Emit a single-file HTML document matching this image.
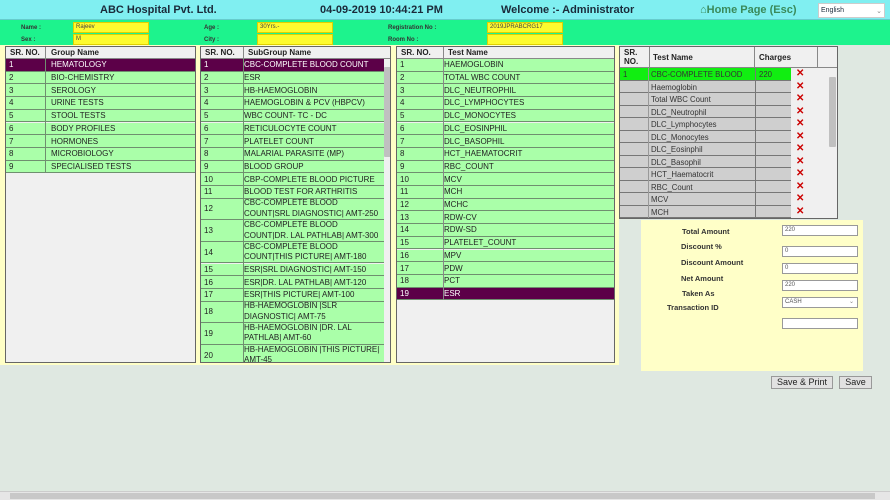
<!DOCTYPE html>
<html><head><meta charset="utf-8"><style>
*{box-sizing:border-box;margin:0;padding:0}
body{width:890px;height:500px;overflow:hidden;background:#dfe8e1;font-family:"Liberation Sans",Arial,sans-serif;position:relative}
.a{position:absolute}
#hdr{left:0;top:0;width:890px;height:20px;background:#80eff1;border-bottom:1px solid #6cc}
#hdr div{position:absolute;top:4px;font-size:11px;font-weight:bold;color:#1a2a3a}
#grn{left:0;top:20px;width:890px;height:25px;background:#1df38d}
.lb{position:absolute;font-size:6px;color:#333;font-weight:bold}
.yb{position:absolute;height:11px;background:#fdfb2e;border:1px solid #e0d000;font-size:6px;color:#444;padding-left:2px;line-height:9px}
#cream{left:0;top:45px;width:619px;height:320px;background:#ffffc6}
.pn{position:absolute;background:#f0f0f0;border:1px solid #666;overflow:hidden}
.r{position:absolute;left:0;background:#aaffa9;border-bottom:1px solid #6f8f6f;font-size:8px;color:#222;display:flex;align-items:center}
.r span{position:absolute;padding-left:3px}
.r.s{background:#5c0048;color:#fff}
.h{position:absolute;left:0;top:0;background:#f0f0f0;border-bottom:1px solid #888;font-size:8px;font-weight:bold;color:#222;height:12px}
.h span{position:absolute;top:1px;padding-left:4px}
.vl{position:absolute;top:0;bottom:0;width:1px;background:#888}
.sb{position:absolute;background:#f0f0f0}
.th{position:absolute;background:#c0c0c0;border-radius:1px}
.g{position:absolute;left:0;width:171px;height:12.5px;background:#cfcfcf;border-bottom:1px solid #777;font-size:7.8px;color:#333}
.g span{position:absolute;top:2px}
.x{position:absolute;left:176px;color:#c00;font-size:10px;font-weight:bold;line-height:10px}
#ybox{left:641px;top:220px;width:222px;height:151px;background:#ffffc8}
.fl{position:absolute;font-size:7.5px;font-weight:bold;color:#333}
.in{position:absolute;left:782px;width:76px;height:11px;background:#fff;border:1px solid #999;font-size:6px;color:#555;padding-left:2px;line-height:9px}
.bt{position:absolute;top:376px;height:13px;background:#e1e1e1;border:1px solid #999;font-size:9px;color:#222;text-align:center;line-height:11px}
</style></head><body>
<div id="hdr" class="a">
<div style="left:100px">ABC Hospital Pvt. Ltd.</div>
<div style="left:320px">04-09-2019 10:44:21 PM</div>
<div style="left:501px">Welcome :- Administrator</div>
<div style="left:700px;color:#3a8a5a">⌂Home Page (Esc)</div>
<div style="left:818px;top:3px;width:67px;height:15px;background:#fff;border:1px solid #ccc;font-weight:normal;font-size:7px;padding:3px 2px">English<span style="position:absolute;right:2px;color:#888">⌄</span></div>
</div>
<div id="grn" class="a">
<div class="lb" style="left:21px;top:5px">Name :</div>
<div class="lb" style="left:21px;top:17px">Sex :</div>
<div class="yb" style="left:73px;top:2px;width:76px">Rajeev</div>
<div class="yb" style="left:73px;top:14px;width:76px">M</div>
<div class="lb" style="left:204px;top:5px">Age :</div>
<div class="lb" style="left:204px;top:17px">City :</div>
<div class="yb" style="left:257px;top:2px;width:76px">30Yrs.-</div>
<div class="yb" style="left:257px;top:14px;width:76px"></div>
<div class="lb" style="left:388px;top:5px">Registration No :</div>
<div class="lb" style="left:388px;top:17px">Room No :</div>
<div class="yb" style="left:487px;top:2px;width:76px">2019JPRABCRG17</div>
<div class="yb" style="left:487px;top:14px;width:76px"></div>
</div>
<div id="cream" class="a"></div>

<!-- panel 1 -->
<div class="pn" style="left:5px;top:46px;width:191px;height:317px">
<div class="h" style="width:191px"><span>SR. NO.</span><span style="left:41px">Group Name</span></div>
<div class="vl" style="left:39px;height:126px"></div>
<div class="r s" style="top:12px;height:12.7px;width:189px"><span>1</span><span style="left:42px">HEMATOLOGY</span></div>
<div class="r" style="top:24.7px;height:12.7px;width:189px"><span>2</span><span style="left:42px">BIO-CHEMISTRY</span></div>
<div class="r" style="top:37.4px;height:12.7px;width:189px"><span>3</span><span style="left:42px">SEROLOGY</span></div>
<div class="r" style="top:50.1px;height:12.7px;width:189px"><span>4</span><span style="left:42px">URINE TESTS</span></div>
<div class="r" style="top:62.8px;height:12.7px;width:189px"><span>5</span><span style="left:42px">STOOL TESTS</span></div>
<div class="r" style="top:75.5px;height:12.7px;width:189px"><span>6</span><span style="left:42px">BODY PROFILES</span></div>
<div class="r" style="top:88.2px;height:12.7px;width:189px"><span>7</span><span style="left:42px">HORMONES</span></div>
<div class="r" style="top:100.9px;height:12.7px;width:189px"><span>8</span><span style="left:42px">MICROBIOLOGY</span></div>
<div class="r" style="top:113.6px;height:12.7px;width:189px"><span>9</span><span style="left:42px">SPECIALISED TESTS</span></div>
<div class="vl" style="left:39px;top:12px;height:114px;background:#6f8f6f"></div>
</div>

<!-- panel 2 -->
<div class="pn" style="left:200px;top:46px;width:191px;height:317px">
<div class="h" style="width:191px"><span>SR. NO.</span><span style="left:43px">SubGroup Name</span></div>
<div class="r s" style="top:12px;height:12.7px;width:183px"><span>1</span><span style="left:40px">CBC-COMPLETE BLOOD COUNT</span></div>
<div class="r" style="top:24.7px;height:12.7px;width:183px"><span>2</span><span style="left:40px">ESR</span></div>
<div class="r" style="top:37.4px;height:12.7px;width:183px"><span>3</span><span style="left:40px">HB-HAEMOGLOBIN</span></div>
<div class="r" style="top:50.1px;height:12.7px;width:183px"><span>4</span><span style="left:40px">HAEMOGLOBIN &amp; PCV (HBPCV)</span></div>
<div class="r" style="top:62.8px;height:12.7px;width:183px"><span>5</span><span style="left:40px">WBC COUNT- TC - DC</span></div>
<div class="r" style="top:75.5px;height:12.7px;width:183px"><span>6</span><span style="left:40px">RETICULOCYTE COUNT</span></div>
<div class="r" style="top:88.2px;height:12.7px;width:183px"><span>7</span><span style="left:40px">PLATELET COUNT</span></div>
<div class="r" style="top:100.9px;height:12.7px;width:183px"><span>8</span><span style="left:40px">MALARIAL PARASITE (MP)</span></div>
<div class="r" style="top:113.6px;height:12.7px;width:183px"><span>9</span><span style="left:40px">BLOOD GROUP</span></div>
<div class="r" style="top:126.3px;height:12.7px;width:183px"><span>10</span><span style="left:40px">CBP-COMPLETE BLOOD PICTURE</span></div>
<div class="r" style="top:139px;height:12.7px;width:183px"><span>11</span><span style="left:40px">BLOOD TEST FOR ARTHRITIS</span></div>
<div class="r" style="top:151.7px;height:21.6px;width:183px"><span>12</span><span style="left:40px;line-height:10.5px">CBC-COMPLETE BLOOD<br>COUNT|SRL DIAGNOSTIC| AMT-250</span></div>
<div class="r" style="top:173.3px;height:21.6px;width:183px"><span>13</span><span style="left:40px;line-height:10.5px">CBC-COMPLETE BLOOD<br>COUNT|DR. LAL PATHLAB| AMT-300</span></div>
<div class="r" style="top:194.9px;height:21.6px;width:183px"><span>14</span><span style="left:40px;line-height:10.5px">CBC-COMPLETE BLOOD<br>COUNT|THIS PICTURE| AMT-180</span></div>
<div class="r" style="top:216.5px;height:12.7px;width:183px"><span>15</span><span style="left:40px">ESR|SRL DIAGNOSTIC| AMT-150</span></div>
<div class="r" style="top:229.2px;height:12.7px;width:183px"><span>16</span><span style="left:40px">ESR|DR. LAL PATHLAB| AMT-120</span></div>
<div class="r" style="top:241.9px;height:12.7px;width:183px"><span>17</span><span style="left:40px">ESR|THIS PICTURE| AMT-100</span></div>
<div class="r" style="top:254.6px;height:21.6px;width:183px"><span>18</span><span style="left:40px;line-height:10.5px">HB-HAEMOGLOBIN |SLR<br>DIAGNOSTIC| AMT-75</span></div>
<div class="r" style="top:276.2px;height:21.6px;width:183px"><span>19</span><span style="left:40px;line-height:10.5px">HB-HAEMOGLOBIN |DR. LAL<br>PATHLAB| AMT-60</span></div>
<div class="r" style="top:297.8px;height:21.6px;width:183px"><span>20</span><span style="left:40px;line-height:10.5px">HB-HAEMOGLOBIN |THIS PICTURE|<br>AMT-45</span></div>
<div class="vl" style="left:42px;top:12px;height:305px;background:#6f8f6f"></div>
<div class="vl" style="left:42px;height:12px"></div>
<div class="sb" style="left:183px;top:12px;width:7px;height:305px"><div class="th" style="left:0;top:8px;width:7px;height:90px"></div></div>
</div>

<!-- panel 3 -->
<div class="pn" style="left:396px;top:46px;width:219px;height:317px">
<div class="h" style="width:219px"><span>SR. NO.</span><span style="left:47px">Test Name</span></div>
<div class="r" style="top:12px;height:12.7px;width:217px"><span>1</span><span style="left:44px">HAEMOGLOBIN</span></div>
<div class="r" style="top:24.7px;height:12.7px;width:217px"><span>2</span><span style="left:44px">TOTAL WBC COUNT</span></div>
<div class="r" style="top:37.4px;height:12.7px;width:217px"><span>3</span><span style="left:44px">DLC_NEUTROPHIL</span></div>
<div class="r" style="top:50.1px;height:12.7px;width:217px"><span>4</span><span style="left:44px">DLC_LYMPHOCYTES</span></div>
<div class="r" style="top:62.8px;height:12.7px;width:217px"><span>5</span><span style="left:44px">DLC_MONOCYTES</span></div>
<div class="r" style="top:75.5px;height:12.7px;width:217px"><span>6</span><span style="left:44px">DLC_EOSINPHIL</span></div>
<div class="r" style="top:88.2px;height:12.7px;width:217px"><span>7</span><span style="left:44px">DLC_BASOPHIL</span></div>
<div class="r" style="top:100.9px;height:12.7px;width:217px"><span>8</span><span style="left:44px">HCT_HAEMATOCRIT</span></div>
<div class="r" style="top:113.6px;height:12.7px;width:217px"><span>9</span><span style="left:44px">RBC_COUNT</span></div>
<div class="r" style="top:126.3px;height:12.7px;width:217px"><span>10</span><span style="left:44px">MCV</span></div>
<div class="r" style="top:139px;height:12.7px;width:217px"><span>11</span><span style="left:44px">MCH</span></div>
<div class="r" style="top:151.7px;height:12.7px;width:217px"><span>12</span><span style="left:44px">MCHC</span></div>
<div class="r" style="top:164.4px;height:12.7px;width:217px"><span>13</span><span style="left:44px">RDW-CV</span></div>
<div class="r" style="top:177.1px;height:12.7px;width:217px"><span>14</span><span style="left:44px">RDW-SD</span></div>
<div class="r" style="top:189.8px;height:12.7px;width:217px"><span>15</span><span style="left:44px">PLATELET_COUNT</span></div>
<div class="r" style="top:202.5px;height:12.7px;width:217px"><span>16</span><span style="left:44px">MPV</span></div>
<div class="r" style="top:215.2px;height:12.7px;width:217px"><span>17</span><span style="left:44px">PDW</span></div>
<div class="r" style="top:227.9px;height:12.7px;width:217px"><span>18</span><span style="left:44px">PCT</span></div>
<div class="r s" style="top:240.6px;height:12.7px;width:217px"><span>19</span><span style="left:44px">ESR</span></div>
<div class="vl" style="left:46px;height:253px"></div>
</div>

<!-- panel 4 -->
<div class="pn" style="left:619px;top:46px;width:219px;height:173px">
<div class="h" style="width:219px;height:21px"><span style="top:1px;line-height:9px">SR.<br>NO.</span><span style="left:29px;top:6px">Test Name</span><span style="left:135px;top:6px">Charges</span></div>
<div class="vl" style="left:29px;height:21px"></div><div class="vl" style="left:134px;height:21px"></div><div class="vl" style="left:197px;height:21px"></div>
<div class="g" style="top:21px;background:#11ee11"><span style="left:3px">1</span><span style="left:31px">CBC-COMPLETE BLOOD</span><span style="left:139px">220</span></div>
<div class="g" style="top:33.5px"><span style="left:31px">Haemoglobin</span></div>
<div class="g" style="top:46px"><span style="left:31px">Total WBC Count</span></div>
<div class="g" style="top:58.5px"><span style="left:31px">DLC_Neutrophil</span></div>
<div class="g" style="top:71px"><span style="left:31px">DLC_Lymphocytes</span></div>
<div class="g" style="top:83.5px"><span style="left:31px">DLC_Monocytes</span></div>
<div class="g" style="top:96px"><span style="left:31px">DLC_Eosinphil</span></div>
<div class="g" style="top:108.5px"><span style="left:31px">DLC_Basophil</span></div>
<div class="g" style="top:121px"><span style="left:31px">HCT_Haematocrit</span></div>
<div class="g" style="top:133.5px"><span style="left:31px">RBC_Count</span></div>
<div class="g" style="top:146px"><span style="left:31px">MCV</span></div>
<div class="g" style="top:158.5px"><span style="left:31px">MCH</span></div>
<div class="vl" style="left:28px;top:21px;background:#999"></div>
<div class="vl" style="left:135px;top:21px;background:#777"></div>
<div class="x" style="top:22px">✕</div><div class="x" style="top:34.5px">✕</div><div class="x" style="top:47px">✕</div><div class="x" style="top:59.5px">✕</div><div class="x" style="top:72px">✕</div><div class="x" style="top:84.5px">✕</div><div class="x" style="top:97px">✕</div><div class="x" style="top:109.5px">✕</div><div class="x" style="top:122px">✕</div><div class="x" style="top:134.5px">✕</div><div class="x" style="top:147px">✕</div><div class="x" style="top:159.5px">✕</div>
<div class="sb" style="left:208px;top:21px;width:9px;height:150px"><div class="th" style="left:1px;top:9px;width:7px;height:70px"></div></div>
</div>

<div id="ybox" class="a"></div>
<div class="fl" style="left:682px;top:227px">Total Amount</div>
<div class="fl" style="left:681px;top:242px">Discount %</div>
<div class="fl" style="left:681px;top:258px">Discount Amount</div>
<div class="fl" style="left:681px;top:274px">Net Amount</div>
<div class="fl" style="left:682px;top:289px">Taken As</div>
<div class="fl" style="left:667px;top:303px">Transaction ID</div>
<div class="in" style="top:225px">220</div>
<div class="in" style="top:246px">0</div>
<div class="in" style="top:263px">0</div>
<div class="in" style="top:280px">220</div>
<div class="in" style="top:297px">CASH<span style="position:absolute;right:3px;color:#888">⌄</span></div>
<div class="in" style="top:318px"></div>
<div class="bt" style="left:771px;width:62px">Save &amp; Print</div>
<div class="bt" style="left:839px;width:33px">Save</div>
<div class="a" style="left:0;top:491px;width:890px;height:9px;background:#e6e6e6;border-top:1px solid #ccc"><div style="position:absolute;left:10px;top:1px;width:865px;height:6px;background:#c8c8c8"></div></div>
</body></html>
